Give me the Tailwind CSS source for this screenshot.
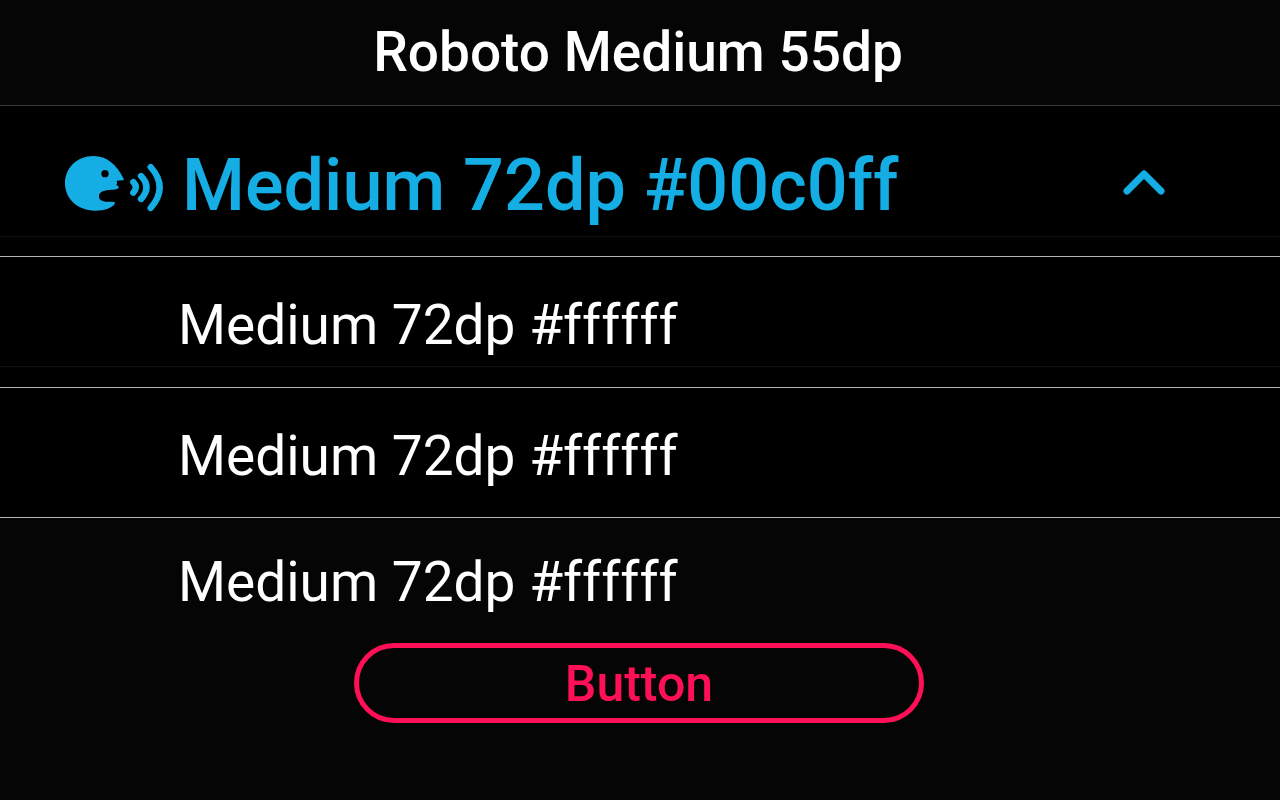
<!DOCTYPE html>
<html lang="en">
<head>
  <meta charset="UTF-8">
  <meta name="viewport" content="width=device-width, initial-scale=1.0">
  <title>Roboto Medium 55dp</title>
  <script src="https://cdn.jsdelivr.net/npm/@tailwindcss/browser@4"></script>
</head>
<body class="bg-[#050505] min-h-screen text-white font-['Roboto',sans-serif]">
  <!-- Header -->
  <header class="border-b border-[#3a3a3a] py-4 pr-1">
    <h1 class="text-[55px] leading-[73px] font-medium text-center">Roboto Medium 55dp</h1>
  </header>

  <main>
    <!-- Expanded list -->
    <section class="bg-black">
      <div class="border-b border-[#b4b4b4] pb-[19px]">
        <div class="flex items-center border-b border-[#111111] pt-[30px] pb-1 pl-16 pr-28 text-[#14aee5]">
          <svg class="w-[100px] h-[58px] shrink-0" viewBox="42 45 300 174" fill="none" aria-hidden="true">
            <path fill="currentColor" fill-rule="evenodd" d="M130 48C80 48 45 85 45 130C45 178 85 212 135 212C165 212 192 202 195 188Q195 185 186 185L168 185C153 184 147 178 147 168C147 154 165 150 185 149C200 149 206 147 206 141Q206 138 199 135Q203 128 200 122L219 121Q223 120 221 116C200 75 172 48 130 48ZM165 90A11 11 0 1 1 165 112A11 11 0 1 1 165 90Z"/>
            <g stroke="currentColor" stroke-width="19" stroke-linecap="round">
              <path d="M250 126Q265 142 250 158"/>
              <path d="M273 108Q306 142 273 177"/>
              <path d="M302 81Q356 142 302 204"/>
            </g>
          </svg>
          <h2 class="flex-1 pl-[18px] pt-1 text-[72px] leading-[92px] font-medium">Medium 72dp #00c0ff</h2>
          <button type="button" aria-label="Collapse" aria-expanded="true" class="w-12 h-8">
            <svg class="w-12 h-8" viewBox="0 0 48 32" fill="none" stroke="currentColor" stroke-width="7" stroke-linecap="round" stroke-linejoin="round">
              <path d="M7 23L24 6L41 23"/>
            </svg>
          </button>
        </div>
      </div>
      <ul>
        <li class="border-b border-[#b4b4b4] pb-5">
          <a href="#" class="block border-b border-[#111111] pl-[178px] pt-8 pb-1 text-[55px] leading-[73px]">Medium 72dp #ffffff</a>
        </li>
        <li class="border-b border-[#b4b4b4] pb-5">
          <a href="#" class="block pl-[178px] pt-8 pb-1 text-[55px] leading-[73px]">Medium 72dp #ffffff</a>
        </li>
      </ul>
    </section>

    <a href="#" class="block pl-[178px] pt-7 text-[55px] leading-[73px]">Medium 72dp #ffffff</a>

    <div class="flex justify-center pt-6 pb-6 pr-0.5">
      <button type="button" class="w-[570px] h-20 pt-0.5 rounded-full border-5 border-[#ff0f56] text-[#ff0f56] text-[50px] leading-none font-medium">Button</button>
    </div>
  </main>
</body>
</html>
